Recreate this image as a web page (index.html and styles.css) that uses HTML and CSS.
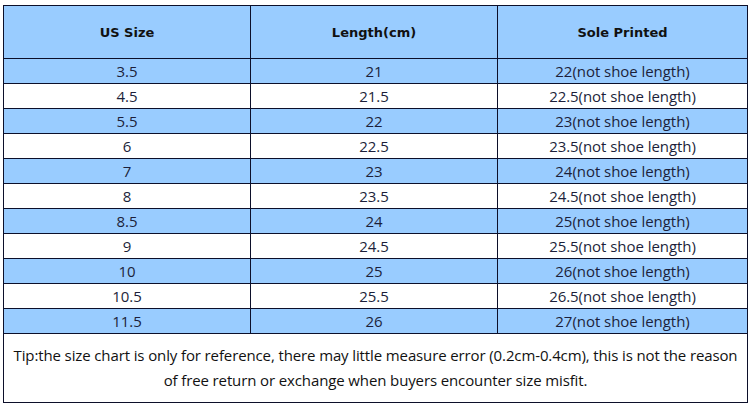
FILE: index.html
```html
<!DOCTYPE html>
<html>
<head>
<meta charset="utf-8">
<link rel="stylesheet" href="styles.css">
</head>
<body>
<table class="chart">
  <colgroup><col class="c1"><col class="c2"><col class="c3"></colgroup>
  <thead>
    <tr class="head"><th>US Size</th><th>Length(cm)</th><th>Sole Printed</th></tr>
  </thead>
  <tbody>
    <tr class="blue"><td>3.5</td><td>21</td><td>22(not shoe length)</td></tr>
    <tr><td>4.5</td><td>21.5</td><td>22.5(not shoe length)</td></tr>
    <tr class="blue"><td>5.5</td><td>22</td><td>23(not shoe length)</td></tr>
    <tr><td>6</td><td>22.5</td><td>23.5(not shoe length)</td></tr>
    <tr class="blue"><td>7</td><td>23</td><td>24(not shoe length)</td></tr>
    <tr><td>8</td><td>23.5</td><td>24.5(not shoe length)</td></tr>
    <tr class="blue"><td>8.5</td><td>24</td><td>25(not shoe length)</td></tr>
    <tr><td>9</td><td>24.5</td><td>25.5(not shoe length)</td></tr>
    <tr class="blue"><td>10</td><td>25</td><td>26(not shoe length)</td></tr>
    <tr><td>10.5</td><td>25.5</td><td>26.5(not shoe length)</td></tr>
    <tr class="blue"><td>11.5</td><td>26</td><td>27(not shoe length)</td></tr>
    <tr class="tip"><td colspan="3">Tip:the size chart is only for reference, there may little measure error (0.2cm-0.4cm), this is not the reason<br>of free return or exchange when buyers encounter size misfit.</td></tr>
  </tbody>
</table>
</body>
</html>
```

FILE: styles.css
```css
html, body {
  margin: 0;
  padding: 0;
  background: #ffffff;
}
.chart {
  margin: 5px 0 0 3px;
  width: 744px;
  border-collapse: collapse;
  table-layout: fixed;
  border: 1px solid #0c0f2a;
  font-family: "Open Sans", "Noto Sans", sans-serif;
  color: #1c1f3a;
}
.c1 { width: 247px; }
.c2 { width: 247px; }
.c3 { width: 250px; }
.chart th, .chart td {
  border: 1px solid #0c0f2a;
  padding: 0;
  text-align: center;
  vertical-align: middle;
}
.head {
  height: 53px;
  background: #99ccff;
}
.head th {
  font-family: "DejaVu Sans", sans-serif;
  font-weight: bold;
  font-size: 13px;
  color: #111;
}
tbody tr {
  height: 25px;
}
tbody td {
  font-size: 15px;
  line-height: 24px;
  letter-spacing: -0.05px;
}
.blue {
  background: #99ccff;
}
.tip {
  height: 69px;
}
.tip td {
  font-size: 15px;
  line-height: 25px;
  letter-spacing: -0.12px;
  color: #111;
}
```
